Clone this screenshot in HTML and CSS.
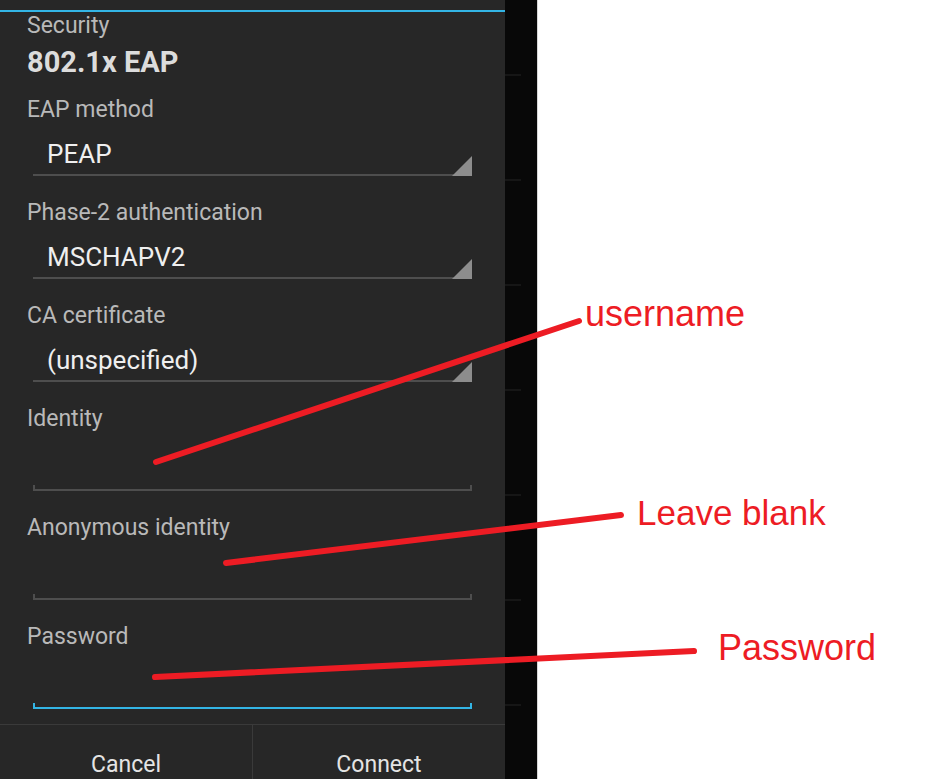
FILE: index.html
```html
<!DOCTYPE html>
<html lang="en">
<head>
    <meta charset="UTF-8" />
    <title>Wi-Fi EAP settings</title>
    <link rel="stylesheet" href="styles.css">
</head>
<body>

<div class="screen">

    <div class="dialog">
        <div class="title-bar"></div>

        <div class="form">
            <div class="label first">Security</div>
            <div class="static">802.1x EAP</div>

            <div class="label after-static">EAP method</div>
            <div class="spinner">PEAP</div>

            <div class="label">Phase-2 authentication</div>
            <div class="spinner">MSCHAPV2</div>

            <div class="label">CA certificate</div>
            <div class="spinner">(unspecified)</div>

            <div class="label">Identity</div>
            <div class="edit"></div>

            <div class="label">Anonymous identity</div>
            <div class="edit"></div>

            <div class="label">Password</div>
            <div class="edit focused"></div>
        </div>

        <div class="buttons">
            <div class="btn">Cancel</div>
            <div class="btn">Connect</div>
        </div>
    </div>

    <div class="backdrop"></div>
    <div class="page"></div>

    <!-- red notes drawn on top of the screenshot -->
    <div class="notes">
        <svg class="strokes" width="943" height="779" viewBox="0 0 943 779">
            <line x1="156" y1="462" x2="579" y2="321" />
            <line x1="226" y1="563" x2="621" y2="515" />
            <line x1="155" y1="677" x2="694" y2="651" />
        </svg>
        <div class="note note-user">username</div>
        <div class="note note-anon">Leave blank</div>
        <div class="note note-pass">Password</div>
    </div>

</div>

</body>
</html>
```

FILE: styles.css
```css
body {
    margin: 0;
    background: #fff;
    font-family: Roboto, "Noto Sans", sans-serif;
}
.screen {
    position: relative;
    display: flex;
    width: 943px;
    height: 779px;
    overflow: hidden;
}

/* dialog panel */
.dialog {
    width: 505px;
    flex: none;
    background: #272727;
}
.title-bar {
    height: 10px;
    border-bottom: 2px solid #33b5e5;
}
.form {
    display: flex;
    flex-direction: column;
    padding: 0 33px 0 27px;
}
.label {
    font-size: 23px;
    line-height: 26px;
    color: #b9b9b9;
    margin-top: 24px;
}
.label.first {
    margin-top: 1px;
}
.label.after-static {
    margin-top: 18px;
}
.static {
    margin-top: 6px;
    font-size: 29px;
    line-height: 34px;
    font-weight: bold;
    color: #dcdcdc;
}
.spinner {
    position: relative;
    margin: 16px 0 0 6px;
    padding: 0 0 5px 14px;
    font-size: 26px;
    line-height: 30px;
    color: #efefef;
    border-bottom: 2px solid #4e4e4e;
}
.spinner::after {
    content: "";
    position: absolute;
    right: 0;
    bottom: -2px;
    border-left: 20px solid transparent;
    border-bottom: 20px solid #8d8d8d;
}
.edit {
    position: relative;
    flex: none;
    height: 57px;
    margin-left: 6px;
    border-bottom: 2px solid #4e4e4e;
}
.edit::after {
    content: "";
    position: absolute;
    left: 0;
    right: 0;
    bottom: -2px;
    height: 6px;
    border-left: 2px solid #4e4e4e;
    border-right: 2px solid #4e4e4e;
}
.edit.focused {
    height: 57px;
    border-bottom-color: #33b5e5;
}
.edit.focused::after {
    border-color: #33b5e5;
}

/* button bar */
.buttons {
    display: flex;
    margin-top: 15px;
    border-top: 1px solid #3a3a3a;
    height: 96px;
}
.btn {
    flex: 1;
    text-align: center;
    padding-top: 27px;
    font-size: 23px;
    line-height: 26px;
    color: #e4e4e4;
}
.btn + .btn {
    border-left: 1px solid #3a3a3a;
}

/* dimmed list behind the dialog */
.backdrop {
    width: 32px;
    flex: none;
    background:
        repeating-linear-gradient(to bottom, transparent 0 74px, #161616 74px 76px, transparent 76px 105px) 0 0 / 16px 100% no-repeat,
        #080808;
}
.page {
    flex: 1;
    background: #fff;
    border-left: 1px solid #d6d6d6;
}

/* annotations */
.notes {
    position: absolute;
    inset: 0;
    pointer-events: none;
}
.strokes {
    position: absolute;
    left: 0;
    top: 0;
}
.strokes line {
    stroke: #ed1c24;
    stroke-width: 6;
    stroke-linecap: round;
}
.note {
    position: absolute;
    font-family: "Liberation Sans", Arial, sans-serif;
    font-size: 36px;
    line-height: 40px;
    color: #ed1c24;
    white-space: nowrap;
}
.note-user {
    left: 585px;
    top: 294px;
}
.note-anon {
    left: 637px;
    top: 493px;
    font-size: 35px;
}
.note-pass {
    left: 718px;
    top: 628px;
}
```
